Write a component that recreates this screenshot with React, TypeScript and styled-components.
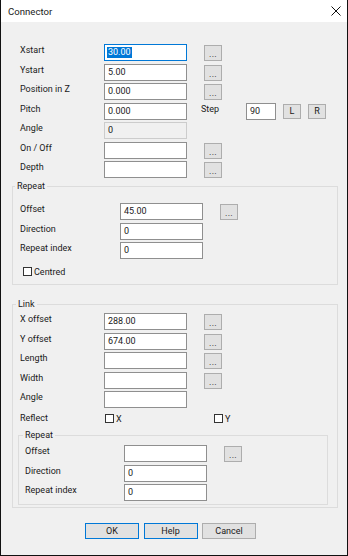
import React from "react";
import styled, { createGlobalStyle } from "styled-components";

const GlobalStyle = createGlobalStyle`
  html, body {
    margin: 0;
    padding: 0;
    background: #ffffff;
  }
  body {
    font-family: Roboto, "Liberation Sans", Arial, sans-serif;
  }
`;

const Window = styled.div`
  width: 348px;
  height: 556px;
  box-sizing: border-box;
  border: 1px solid #111111;
  border-top: none;
  background: #f0f0f0;
  display: flex;
  flex-direction: column;
  font-family: Roboto, "Liberation Sans", Arial, sans-serif;
  font-size: 9px;
  color: #1a1a1a;
`;

const TitleBar = styled.div`
  height: 22px;
  flex-shrink: 0;
  background: #ffffff;
  display: flex;
  align-items: center;
  justify-content: space-between;
  padding: 0 6px 0 7px;
  font-size: 9.6px;
`;

const CloseIcon = () => (
  <svg width="10" height="10" viewBox="0 0 10 10">
    <path d="M0.5 0.5 L9.5 9.5 M9.5 0.5 L0.5 9.5" stroke="#111" strokeWidth="1" fill="none" />
  </svg>
);

const Body = styled.div`
  flex: 1;
  display: flex;
  flex-direction: column;
  padding: 22px 9px 0 11px;
`;

const Rows = styled.div<{ indent?: number }>`
  display: flex;
  flex-direction: column;
  gap: 2.5px;
  margin-left: ${({ indent }) => indent ?? 0}px;
`;

const Row = styled.div`
  display: flex;
  align-items: flex-start;
  height: 17px;
`;

const Label = styled.div<{ w: number }>`
  width: ${({ w }) => w}px;
  flex-shrink: 0;
  line-height: 13px;
  white-space: nowrap;
`;

const Field = styled.div<{ w?: number; focused?: boolean; readOnly?: boolean }>`
  width: ${({ w }) => w ?? 83}px;
  height: 17px;
  box-sizing: border-box;
  border: 1px solid ${({ focused, readOnly }) => (focused ? "#0078d7" : readOnly ? "#cccccc" : "#8f8f8f")};
  background: ${({ readOnly }) => (readOnly ? "#f0f0f0" : "#ffffff")};
  padding: 0 3px;
  line-height: 15px;
  white-space: nowrap;
  overflow: hidden;
`;

const Selected = styled.span`
  display: inline-block;
  background: #0078d7;
  color: #ffffff;
  line-height: 11px;
  margin-left: -1px;
  padding: 0 1px;
`;

const SmallBtn = styled.div<{ gap?: number; h?: number }>`
  width: 18px;
  height: ${({ h }) => h ?? 16}px;
  margin-top: 1px;
  margin-left: ${({ gap }) => gap ?? 17}px;
  box-sizing: border-box;
  border: 1px solid #adadad;
  background: #e1e1e1;
  display: flex;
  align-items: center;
  justify-content: center;
  line-height: 13px;
`;

const Dots = styled.span`
  padding-top: 3px;
  letter-spacing: 0.3px;
`;

const StepLabel = styled.div`
  width: 45px;
  margin-left: 14px;
  line-height: 13px;
`;

const Group = styled.fieldset<{ top: number; pt: number; pb: number; pl: number; ml?: number; mr?: number }>`
  margin: ${({ top }) => top}px ${({ mr }) => mr ?? 0}px 0 ${({ ml }) => ml ?? 0}px;
  padding: ${({ pt }) => pt}px 0 ${({ pb }) => pb}px ${({ pl }) => pl}px;
  border: 1px solid #dcdcdc;
  min-width: 0;
`;

const Legend = styled.legend<{ shift: number }>`
  padding: 0 2px;
  margin-left: ${({ shift }) => shift}px;
  line-height: 12px;
  font-size: 9px;
`;

const CheckRow = styled.div<{ top: number; indent?: number }>`
  display: flex;
  align-items: center;
  height: 11px;
  margin-top: ${({ top }) => top}px;
  padding-left: ${({ indent }) => indent ?? 0}px;
`;

const CheckItem = styled.div<{ w?: number }>`
  display: flex;
  align-items: center;
  width: ${({ w }) => (w ? `${w}px` : "auto")};
`;

const Box = styled.span`
  width: 9px;
  height: 9px;
  box-sizing: border-box;
  border: 1px solid #333333;
  background: #ffffff;
  margin-right: 2px;
  flex-shrink: 0;
`;

const ButtonBar = styled.div`
  display: flex;
  justify-content: center;
  gap: 4.5px;
  margin-top: 15px;
  padding-right: 9px;
`;

const DialogButton = styled.div<{ primary?: boolean }>`
  width: 54px;
  height: 16px;
  box-sizing: border-box;
  border: 1px solid ${({ primary }) => (primary ? "#0078d7" : "#adadad")};
  background: #e1e1e1;
  display: flex;
  align-items: center;
  justify-content: center;
`;

type FieldRow = { label: string; value?: string; btn?: boolean };

const Dotted = ({ gap }: { gap?: number }) => (
  <SmallBtn gap={gap}>
    <Dots>...</Dots>
  </SmallBtn>
);

const FieldRows = ({ rows, labelW, indent }: { rows: FieldRow[]; labelW: number; indent?: number }) => (
  <Rows indent={indent}>
    {rows.map((r) => (
      <Row key={r.label}>
        <Label w={labelW}>{r.label}</Label>
        <Field>{r.value}</Field>
        {r.btn && <Dotted />}
      </Row>
    ))}
  </Rows>
);

export default function App() {
  return (
    <>
      <GlobalStyle />
      <Window>
        <TitleBar>
          <span>Connector</span>
          <CloseIcon />
        </TitleBar>
        <Body>
          <Rows indent={8}>
            <Row>
              <Label w={84}>Xstart</Label>
              <Field focused>
                <Selected>30.00</Selected>
              </Field>
              <Dotted />
            </Row>
            <Row>
              <Label w={84}>Ystart</Label>
              <Field>5.00</Field>
              <Dotted />
            </Row>
            <Row>
              <Label w={84}>Position in Z</Label>
              <Field>0.000</Field>
              <Dotted />
            </Row>
            <Row>
              <Label w={84}>Pitch</Label>
              <Field>0.000</Field>
              <StepLabel>Step</StepLabel>
              <Field w={30}>90</Field>
              <SmallBtn gap={7} h={15}>L</SmallBtn>
              <SmallBtn gap={7} h={15}>R</SmallBtn>
            </Row>
            <Row>
              <Label w={84}>Angle</Label>
              <Field readOnly>0</Field>
            </Row>
            <Row>
              <Label w={84}>On / Off</Label>
              <Field />
              <Dotted />
            </Row>
            <Row>
              <Label w={84}>Depth</Label>
              <Field />
              <Dotted />
            </Row>
          </Rows>

          <Group top={2} pt={11} pb={7} pl={7}>
            <Legend shift={-5}>Repeat</Legend>
            <FieldRows
              labelW={100}
              rows={[
                { label: "Offset", value: "45.00", btn: true },
                { label: "Direction", value: "0" },
                { label: "Repeat index", value: "0" },
              ]}
            />
            <CheckRow top={7} indent={3}>
              <Box />
              <span>Centred</span>
            </CheckRow>
          </Group>

          <Group top={13} pt={3} pb={2} pl={7}>
            <Legend shift={-4}>Link</Legend>
            <FieldRows
              labelW={84}
              rows={[
                { label: "X offset", value: "288.00", btn: true },
                { label: "Y offset", value: "674.00", btn: true },
                { label: "Length", btn: true },
                { label: "Width", btn: true },
                { label: "Angle" },
              ]}
            />
            <CheckRow top={5}>
              <Label w={85}>Reflect</Label>
              <CheckItem w={109}>
                <Box />
                <span>X</span>
              </CheckItem>
              <CheckItem>
                <Box />
                <span>Y</span>
              </CheckItem>
            </CheckRow>
            <Group top={5} pt={4} pb={3} pl={6} ml={-2} mr={9}>
              <Legend shift={-2}>Repeat</Legend>
              <FieldRows
                labelW={99}
                rows={[
                  { label: "Offset", btn: true },
                  { label: "Direction", value: "0" },
                  { label: "Repeat index", value: "0" },
                ]}
              />
            </Group>
          </Group>

          <ButtonBar>
            <DialogButton primary>OK</DialogButton>
            <DialogButton primary>Help</DialogButton>
            <DialogButton>Cancel</DialogButton>
          </ButtonBar>
        </Body>
      </Window>
    </>
  );
}
